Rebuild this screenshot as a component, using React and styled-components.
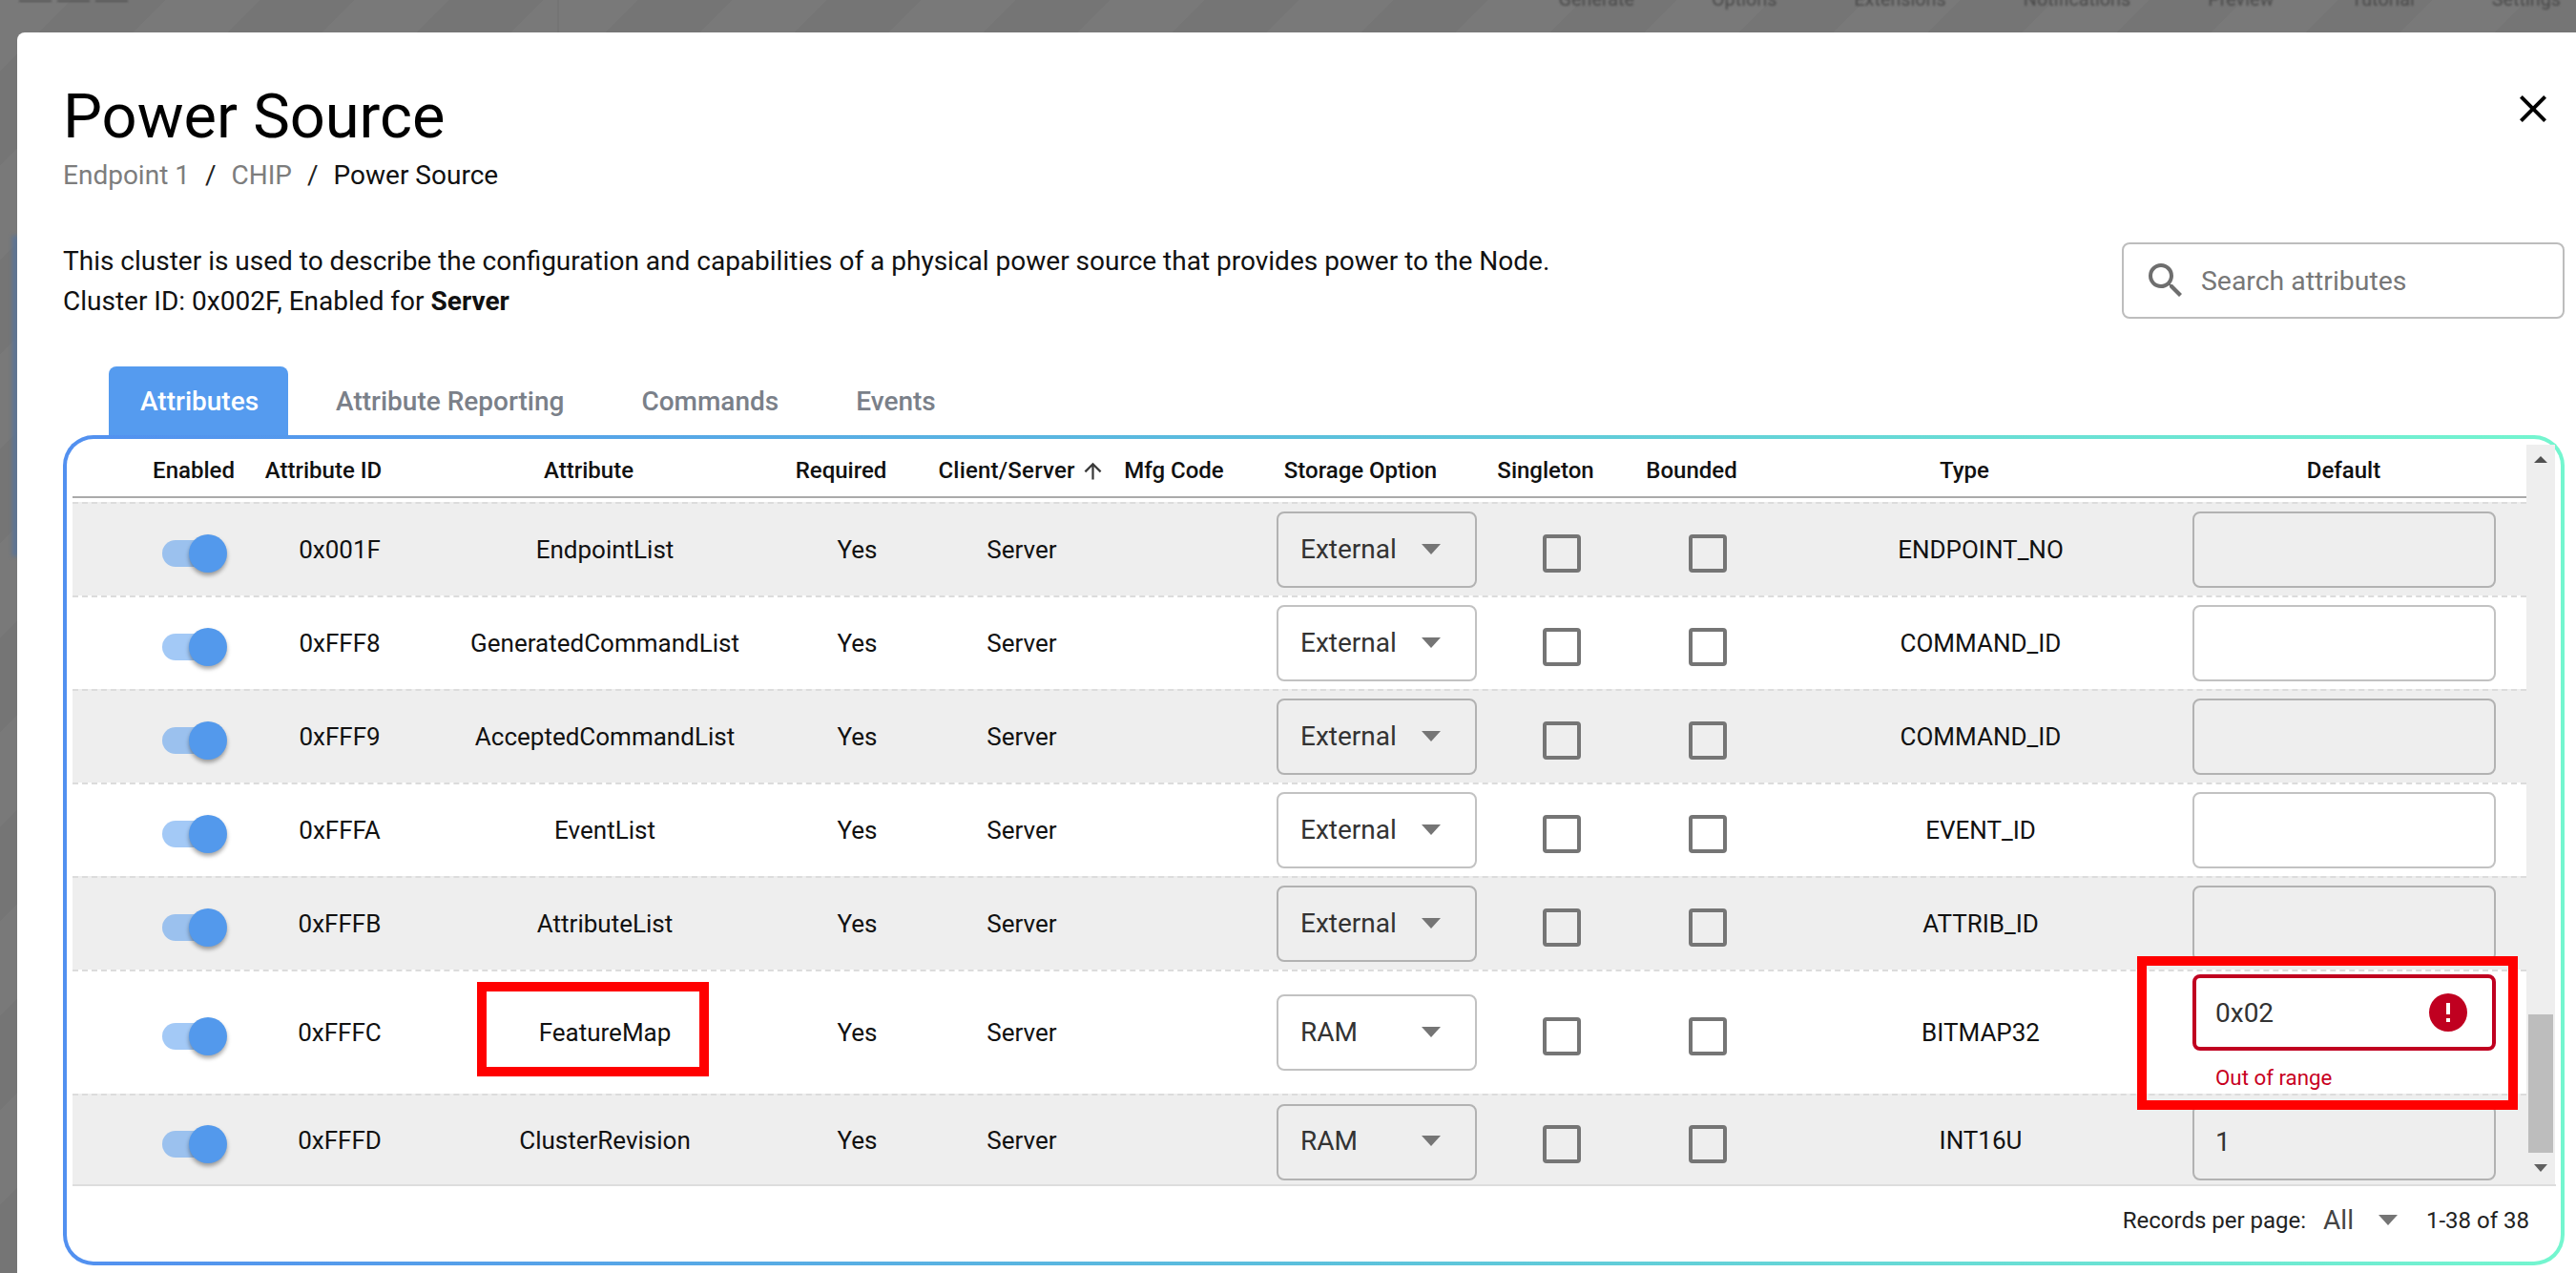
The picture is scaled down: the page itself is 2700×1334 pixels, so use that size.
import styled, { createGlobalStyle } from "styled-components";

const GlobalStyle = createGlobalStyle`
  html, body {
    margin: 0;
    padding: 0;
    overflow: hidden;
  }
  body {
    font-family: Roboto, "Liberation Sans", sans-serif;
    color: #111;
  }
`;

const Page = styled.div`
  position: relative;
  width: 2700px;
  height: 1334px;
  display: flex;
  flex-direction: column;
  overflow: hidden;
  background: repeating-linear-gradient(-45deg, #797979 0 70px, #757575 70px 140px);
`;

const TopBar = styled.div`
  height: 34px;
  flex: none;
  display: flex;
  overflow: hidden;
`;

const Brand = styled.div`
  width: 586px;
  height: 34px;
  padding-left: 20px;
  box-sizing: border-box;
  display: flex;
  gap: 6px;
  border-right: 2px solid rgba(0, 0, 0, 0.04);
`;

const BrandDash = styled.span`
  width: 34px;
  height: 2px;
  background: #555;
  filter: blur(1px);
`;

const Nav = styled.div`
  margin-left: auto;
  padding-right: 16px;
  display: flex;
  gap: 81px;
  margin-top: -15px;
  font-size: 19.8px;
  line-height: 30px;
  color: #4a4a4a;
  filter: blur(0.8px);
`;

// the blurred side drawer that shows behind the dialog
const DrawerEdge = styled.div`
  position: absolute;
  left: 13px;
  top: 247px;
  width: 6px;
  height: 336px;
  background: #5a7396;
  filter: blur(2px);
`;

const Modal = styled.div`
  position: relative;
  flex: 1;
  margin-left: 18px;
  padding: 0 12px 0 48px;
  background: #fff;
  border-top-left-radius: 8px;
  display: flex;
  flex-direction: column;
`;

const TitleRow = styled.div`
  display: flex;
  justify-content: space-between;
  align-items: flex-start;
  height: 190px;
  padding-top: 50px;
  box-sizing: border-box;
`;

const Title = styled.h1`
  margin: 0;
  font-size: 65px;
  line-height: 76px;
  font-weight: 400;
  color: #000;
`;

const Crumbs = styled.div`
  display: flex;
  gap: 16px;
  margin-top: 4px;
  font-size: 28px;
  line-height: 40px;
`;

const Crumb = styled.span`
  color: ${(p) => (p.$current ? "#111" : "#7d7d7d")};
`;

const Slash = styled.span`
  color: #222;
`;

const CloseIcon = styled.svg`
  width: 48px;
  height: 48px;
  margin: 6px 9px 0 0;
  fill: #000;
`;

const InfoRow = styled.div`
  display: flex;
  justify-content: space-between;
  align-items: flex-start;
  height: 160px;
  padding-top: 30px;
  box-sizing: border-box;
`;

const Description = styled.div`
  font-size: 28px;
  line-height: 42px;
  color: #111;
  margin-top: -1px;
  b {
    font-weight: 700;
  }
`;

const SearchBox = styled.div`
  width: 464px;
  height: 80px;
  box-sizing: border-box;
  border: 2px solid #bdbdbd;
  border-radius: 8px;
  display: flex;
  align-items: center;
  padding-left: 20px;
  gap: 13px;
  color: #777;
  font-size: 28.4px;
`;

const SearchIcon = styled.svg`
  width: 48px;
  height: 48px;
  fill: #6e6e6e;
`;

const Tabs = styled.div`
  display: flex;
  gap: 17px;
  margin-left: 48px;
  height: 72px;
`;

const Tab = styled.div`
  padding: 0 31px 0 33px;
  display: flex;
  align-items: center;
  font-size: 28px;
  font-weight: 500;
  border-radius: 8px 8px 0 0;
  background: ${(p) => (p.$active ? "#559bef" : "transparent")};
  color: ${(p) => (p.$active ? "#fff" : "#7a8089")};
`;

const Panel = styled.div`
  width: 2622px;
  height: 870px;
  box-sizing: border-box;
  border: 4px solid transparent;
  border-radius: 32px;
  background:
    linear-gradient(#fff, #fff) padding-box,
    linear-gradient(90deg, #5290f0, #5bc0dc 50%, #74f6cf) border-box;
  padding: 6px 5px 0 6px;
  display: flex;
  flex-direction: column;
`;

const TableArea = styled.div`
  display: flex;
  height: 775px;
`;

const Table = styled.div`
  width: 2572px;
  display: flex;
  flex-direction: column;
`;

const columns = "186px 188px 368px 161px 184px 175px 210px 178px 128px 444px 350px";

const HeaderRow = styled.div`
  display: grid;
  grid-template-columns: ${columns};
  height: 54px;
  align-items: center;
  border-bottom: 2px solid #aaa;
  margin-bottom: 4px;
  font-size: 24px;
  font-weight: 500;
  color: #111;
`;

const HeadCell = styled.div`
  display: flex;
  justify-content: center;
  align-items: center;
  padding-left: ${(p) => p.$left || 0}px;
  padding-right: ${(p) => p.$right ?? 34}px;
  white-space: nowrap;
`;

const SortedLabel = styled.span`
  width: 140px;
  white-space: nowrap;
  letter-spacing: 0.2px;
`;

const SortIcon = styled.svg`
  width: 27px;
  height: 27px;
  margin-left: 8px;
  flex: none;
  fill: #3a3a3a;
`;

const Row = styled.div`
  display: grid;
  grid-template-columns: ${columns};
  height: ${(p) => p.$height || 98}px;
  box-sizing: border-box;
  align-items: center;
  border-top: 2px dashed #dcdcdc;
  background: ${(p) => (p.$shaded ? "#eeeeee" : "#fff")};
  font-size: 26px;
  color: #111;
`;

const Cell = styled.div`
  position: relative;
  text-align: center;
  white-space: nowrap;
`;

const ControlCell = styled.div`
  display: flex;
  justify-content: center;
  margin-top: ${(p) => p.$nudge || 0}px;
`;

const SwitchCell = styled.div`
  padding-left: 94px;
  margin-top: 8px;
`;

const SwitchTrack = styled.div`
  width: 56px;
  height: 28px;
  border-radius: 14px;
  background: rgba(79, 151, 238, 0.52);
  display: flex;
  align-items: center;
  justify-content: flex-end;
`;

const SwitchThumb = styled.div`
  width: 40px;
  height: 40px;
  flex: none;
  margin-right: -12px;
  border-radius: 50%;
  background: #5399ec;
  box-shadow: 0 3px 4px rgba(0, 0, 0, 0.35);
`;

const Select = styled.div`
  width: 210px;
  height: 80px;
  box-sizing: border-box;
  border: 2px solid ${(p) => (p.$shaded ? "#b2b2b2" : "#c2c2c2")};
  border-radius: 8px;
  padding: 0 36px 2px 23px;
  display: flex;
  align-items: center;
  justify-content: space-between;
  font-size: 28px;
  color: #333;
`;

const Caret = styled.span`
  width: 0;
  height: 0;
  flex: none;
  border-left: ${(p) => p.$size || 10}px solid transparent;
  border-right: ${(p) => p.$size || 10}px solid transparent;
  border-top: ${(p) => (p.$size || 10) + 1}px solid ${(p) => p.$color || "#757575"};
`;

const UpCaret = styled(Caret)`
  border-top: 0;
  border-bottom: ${(p) => p.$size || 10}px solid ${(p) => p.$color || "#757575"};
`;

const CheckCell = styled.div`
  display: flex;
  justify-content: center;
  margin-top: 8px;
`;

const Checkbox = styled.div`
  width: 40px;
  height: 40px;
  box-sizing: border-box;
  border: 4px solid #757575;
  border-radius: 4px;
`;

const DefaultCell = styled.div`
  position: relative;
  padding-right: 33px;
  margin-top: ${(p) => p.$nudge || 0}px;
`;

const Input = styled.div`
  width: 318px;
  height: 80px;
  box-sizing: border-box;
  border: ${(p) => (p.$error ? "4px solid #c00020" : `2px solid ${p.$shaded ? "#b2b2b2" : "#c2c2c2"}`)};
  border-radius: 8px;
  padding: 0 22px 0 ${(p) => (p.$error ? 20 : 22)}px;
  display: flex;
  align-items: center;
  justify-content: space-between;
  font-size: 28px;
  color: #333;
`;

const ErrorField = styled.div`
  height: 124px;
  margin-top: 2px;
`;

const ErrorText = styled.div`
  margin: 15px 0 0 24px;
  font-size: 22.3px;
  line-height: 26px;
  color: #c8001e;
`;

const AlertIcon = styled.svg`
  width: 48px;
  height: 48px;
  flex: none;
  fill: #c00020;
`;

// red annotation rectangles drawn over the table
const Highlight = styled.div`
  position: absolute;
  z-index: 2;
  box-sizing: border-box;
  border: 10px solid #f00;
  pointer-events: none;
`;

const AttributeHighlight = styled(Highlight)`
  left: 50px;
  top: -38px;
  width: 243px;
  height: 99px;
`;

const DefaultHighlight = styled(Highlight)`
  left: -58px;
  top: -17px;
  width: 399px;
  height: 161px;
`;

const Scrollbar = styled.div`
  width: 30px;
  background: #eee;
  display: flex;
  flex-direction: column;
  align-items: center;
  padding: 12px 0 13px;
  box-sizing: border-box;
`;

const ScrollThumb = styled.div`
  width: 26px;
  height: 145px;
  margin: auto 0 12px;
  background: #bdbdbd;
`;

const Footer = styled.div`
  flex: 1;
  border-top: 2px solid #ddd;
  display: flex;
  align-items: center;
  justify-content: flex-end;
  padding: 0 28px 8px 0;
  font-size: 24px;
  color: #222;
`;

const PageSize = styled.span`
  font-size: 28px;
  margin: 0 26px 0 18px;
  color: #444;
`;

const PageRange = styled.span`
  margin-left: 30px;
`;

const rows = [
  { id: "0x001F", name: "EndpointList", storage: "External", type: "ENDPOINT_NO" },
  { id: "0xFFF8", name: "GeneratedCommandList", storage: "External", type: "COMMAND_ID" },
  { id: "0xFFF9", name: "AcceptedCommandList", storage: "External", type: "COMMAND_ID" },
  { id: "0xFFFA", name: "EventList", storage: "External", type: "EVENT_ID" },
  { id: "0xFFFB", name: "AttributeList", storage: "External", type: "ATTRIB_ID" },
  { id: "0xFFFC", name: "FeatureMap", storage: "RAM", type: "BITMAP32", value: "0x02", error: true, height: 130 },
  { id: "0xFFFD", name: "ClusterRevision", storage: "RAM", type: "INT16U", value: "1", height: 95, nudge: 4 },
];

const navItems = ["Generate", "Options", "Extensions", "Notifications", "Preview", "Tutorial", "Settings"];

function AttributeRow({ row, shaded }) {
  return (
    <Row $shaded={shaded} $height={row.height}>
      <SwitchCell>
        <SwitchTrack>
          <SwitchThumb />
        </SwitchTrack>
      </SwitchCell>
      <Cell>{row.id}</Cell>
      <Cell>
        {row.error && <AttributeHighlight />}
        {row.name}
      </Cell>
      <Cell>Yes</Cell>
      <Cell>Server</Cell>
      <Cell />
      <ControlCell $nudge={row.nudge}>
        <Select $shaded={shaded}>
          {row.storage}
          <Caret />
        </Select>
      </ControlCell>
      <CheckCell>
        <Checkbox />
      </CheckCell>
      <CheckCell>
        <Checkbox />
      </CheckCell>
      <Cell>{row.type}</Cell>
      <DefaultCell $nudge={row.nudge}>
        {row.error ? (
          <>
            <DefaultHighlight />
            <ErrorField>
              <Input $error>
                {row.value}
                <AlertIcon viewBox="0 0 24 24">
                  <path d="M13,13H11V7H13M13,17H11V15H13M12,2A10,10 0 0,0 2,12A10,10 0 0,0 12,22A10,10 0 0,0 22,12A10,10 0 0,0 12,2Z" />
                </AlertIcon>
              </Input>
              <ErrorText>Out of range</ErrorText>
            </ErrorField>
          </>
        ) : (
          <Input $shaded={shaded}>{row.value}</Input>
        )}
      </DefaultCell>
    </Row>
  );
}

export default function App() {
  return (
    <>
      <GlobalStyle />
      <Page>
        <TopBar>
          <Brand>
            <BrandDash />
            <BrandDash />
            <BrandDash />
          </Brand>
          <Nav>
            {navItems.map((item) => (
              <span key={item}>{item}</span>
            ))}
          </Nav>
        </TopBar>
        <DrawerEdge />
        <Modal>
          <TitleRow>
            <div>
              <Title>Power Source</Title>
              <Crumbs>
                <Crumb>Endpoint 1</Crumb>
                <Slash>/</Slash>
                <Crumb>CHIP</Crumb>
                <Slash>/</Slash>
                <Crumb $current>Power Source</Crumb>
              </Crumbs>
            </div>
            <CloseIcon viewBox="0 0 24 24">
              <path d="M19,6.41L17.59,5L12,10.59L6.41,5L5,6.41L10.59,12L5,17.59L6.41,19L12,13.41L17.59,19L19,17.59L13.41,12L19,6.41Z" />
            </CloseIcon>
          </TitleRow>
          <InfoRow>
            <Description>
              This cluster is used to describe the configuration and capabilities of a physical power source that
              provides power to the Node.
              <br />
              Cluster ID: 0x002F, Enabled for <b>Server</b>
            </Description>
            <SearchBox>
              <SearchIcon viewBox="0 0 24 24">
                <path d="M9.5,3A6.5,6.5 0 0,1 16,9.5C16,11.11 15.41,12.59 14.44,13.73L14.71,14H15.5L20.5,19L19,20.5L14,15.5V14.71L13.73,14.44C12.59,15.41 11.11,16 9.5,16A6.5,6.5 0 0,1 3,9.5A6.5,6.5 0 0,1 9.5,3M9.5,5C7,5 5,7 5,9.5C5,12 7,14 9.5,14C12,14 14,12 14,9.5C14,7 12,5 9.5,5Z" />
              </SearchIcon>
              Search attributes
            </SearchBox>
          </InfoRow>
          <Tabs>
            <Tab $active>Attributes</Tab>
            <Tab>Attribute Reporting</Tab>
            <Tab>Commands</Tab>
            <Tab>Events</Tab>
          </Tabs>
          <Panel>
            <TableArea>
              <Table>
                <HeaderRow>
                  <HeadCell $left={68} $right={0}>Enabled</HeadCell>
                  <HeadCell>Attribute ID</HeadCell>
                  <HeadCell>Attribute</HeadCell>
                  <HeadCell>Required</HeadCell>
                  <HeadCell $right={0}>
                    <SortedLabel>Client/Server</SortedLabel>
                    <SortIcon viewBox="0 0 24 24">
                      <path d="M13,20H11V8L5.5,13.5L4.08,12.08L12,4.16L19.92,12.08L18.5,13.5L13,8V20Z" />
                    </SortIcon>
                  </HeadCell>
                  <HeadCell $right={40}>Mfg Code</HeadCell>
                  <HeadCell>Storage Option</HeadCell>
                  <HeadCell>Singleton</HeadCell>
                  <HeadCell>Bounded</HeadCell>
                  <HeadCell>Type</HeadCell>
                  <HeadCell $right={33}>Default</HeadCell>
                </HeaderRow>
                {rows.map((row, i) => (
                  <AttributeRow key={row.id} row={row} shaded={i % 2 === 0} />
                ))}
              </Table>
              <Scrollbar>
                <UpCaret $size={7} $color="#505050" />
                <ScrollThumb />
                <Caret $size={7} $color="#606060" />
              </Scrollbar>
            </TableArea>
            <Footer>
              Records per page:
              <PageSize>All</PageSize>
              <Caret />
              <PageRange>1-38 of 38</PageRange>
            </Footer>
          </Panel>
        </Modal>
      </Page>
    </>
  );
}
